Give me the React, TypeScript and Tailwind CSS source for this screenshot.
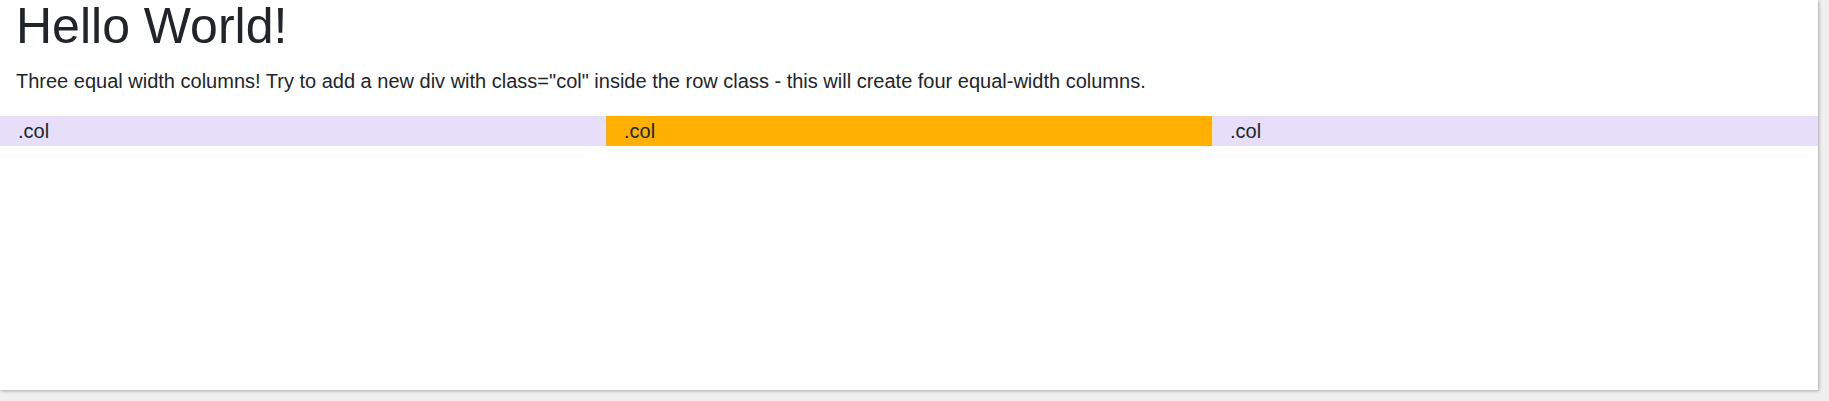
export default function App() {
  return (
    <div className="h-[401px] w-full bg-[#efefef] font-['Liberation_Sans',Arial,sans-serif] text-[#212529]">
      <div className="h-[390px] w-[1818px] bg-white shadow-[1px_1px_3px_rgba(0,0,0,0.3)]">
        <h1 className="px-4 pt-px text-[50px] leading-[50px]">Hello World!</h1>
        <p className="mt-[15px] mb-5 px-4 text-[20px] leading-[30px]">
          Three equal width columns! Try to add a new div with class="col" inside the row class - this will create four equal-width columns.
        </p>
        <div className="grid grid-cols-3 text-[20px] leading-[30px]">
          <div className="bg-[#e7dff9] px-[18px]">.col</div>
          <div className="bg-[#ffb000] px-[18px]">.col</div>
          <div className="bg-[#e7dff9] px-[18px]">.col</div>
        </div>
      </div>
    </div>
  )
}
